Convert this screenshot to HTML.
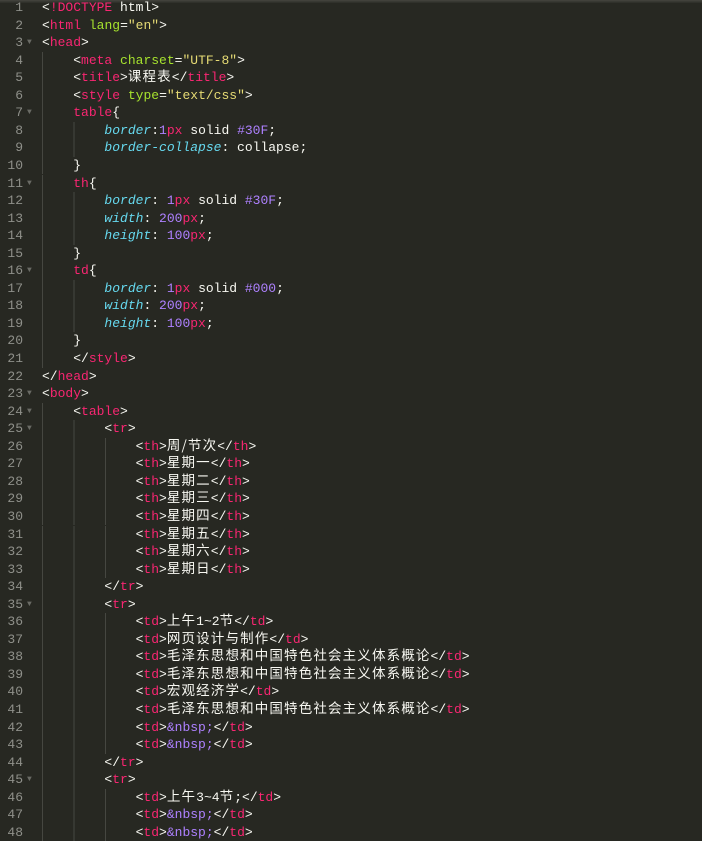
<!DOCTYPE html>
<html><head><meta charset="UTF-8"><style>
body{margin:0;width:702px;height:829px;overflow:hidden;background:#272822;position:relative;font-family:"Liberation Mono","Noto Sans CJK SC",monospace;font-size:13px;}
.bar{position:absolute;left:0;top:0;width:702px;height:3px;background:linear-gradient(#45453f,#2c2d27);}
.l{position:absolute;left:0;height:17.55px;line-height:17.55px;width:702px;white-space:pre;color:#F8F8F2;overflow:hidden;}
.n{position:absolute;left:0;width:23px;text-align:right;color:#8F908A;}
.f{position:absolute;left:27px;top:0;color:#6a6b65;font-size:8px;}
.c{position:absolute;left:42px;}
.g1,.g2,.g3,.g4{background-repeat:no-repeat;background-position:42px 0;background-image:repeating-linear-gradient(90deg,#464741 0 1px,transparent 1px 31.4px);}
.g1{background-size:2px 100%}.g2{background-size:33px 100%}.g3{background-size:65px 100%}.g4{background-size:96px 100%}
.t{color:#F92672}.a{color:#A6E22E}.s{color:#E6DB74}.p{color:#66D9EF;font-style:italic}.u{color:#AE81FF}
.k{letter-spacing:1.15px;font-family:"Noto Sans CJK SC",sans-serif;font-size:13.5px;line-height:1px;}
</style></head><body><div class="bar"></div>
<div class="l" style="top:-1px"><span class="n">1</span><span class="c">&lt;<span class="t">!DOCTYPE</span> html&gt;</span></div>
<div class="l" style="top:16.55px"><span class="n">2</span><span class="c">&lt;<span class="t">html</span> <span class="a">lang</span>=<span class="s">"en"</span>&gt;</span></div>
<div class="l" style="top:34.1px"><span class="n">3</span><span class="f">▼</span><span class="c">&lt;<span class="t">head</span>&gt;</span></div>
<div class="l g1" style="top:51.65px"><span class="n">4</span><span class="c">    &lt;<span class="t">meta</span> <span class="a">charset</span>=<span class="s">"UTF-8"</span>&gt;</span></div>
<div class="l g1" style="top:69.2px"><span class="n">5</span><span class="c">    &lt;<span class="t">title</span>&gt;<span class="k">课程表</span>&lt;/<span class="t">title</span>&gt;</span></div>
<div class="l g1" style="top:86.75px"><span class="n">6</span><span class="c">    &lt;<span class="t">style</span> <span class="a">type</span>=<span class="s">"text/css"</span>&gt;</span></div>
<div class="l g1" style="top:104.3px"><span class="n">7</span><span class="f">▼</span><span class="c">    <span class="t">table</span>{</span></div>
<div class="l g2" style="top:121.85px"><span class="n">8</span><span class="c">        <span class="p">border</span>:<span class="u">1</span><span class="t">px</span> solid <span class="u">#30F</span>;</span></div>
<div class="l g2" style="top:139.4px"><span class="n">9</span><span class="c">        <span class="p">border-collapse</span>: collapse;</span></div>
<div class="l g1" style="top:156.95px"><span class="n">10</span><span class="c">    }</span></div>
<div class="l g1" style="top:174.5px"><span class="n">11</span><span class="f">▼</span><span class="c">    <span class="t">th</span>{</span></div>
<div class="l g2" style="top:192.05px"><span class="n">12</span><span class="c">        <span class="p">border</span>: <span class="u">1</span><span class="t">px</span> solid <span class="u">#30F</span>;</span></div>
<div class="l g2" style="top:209.6px"><span class="n">13</span><span class="c">        <span class="p">width</span>: <span class="u">200</span><span class="t">px</span>;</span></div>
<div class="l g2" style="top:227.15px"><span class="n">14</span><span class="c">        <span class="p">height</span>: <span class="u">100</span><span class="t">px</span>;</span></div>
<div class="l g1" style="top:244.7px"><span class="n">15</span><span class="c">    }</span></div>
<div class="l g1" style="top:262.25px"><span class="n">16</span><span class="f">▼</span><span class="c">    <span class="t">td</span>{</span></div>
<div class="l g2" style="top:279.8px"><span class="n">17</span><span class="c">        <span class="p">border</span>: <span class="u">1</span><span class="t">px</span> solid <span class="u">#000</span>;</span></div>
<div class="l g2" style="top:297.35px"><span class="n">18</span><span class="c">        <span class="p">width</span>: <span class="u">200</span><span class="t">px</span>;</span></div>
<div class="l g2" style="top:314.9px"><span class="n">19</span><span class="c">        <span class="p">height</span>: <span class="u">100</span><span class="t">px</span>;</span></div>
<div class="l g1" style="top:332.45px"><span class="n">20</span><span class="c">    }</span></div>
<div class="l g1" style="top:350px"><span class="n">21</span><span class="c">    &lt;/<span class="t">style</span>&gt;</span></div>
<div class="l" style="top:367.55px"><span class="n">22</span><span class="c">&lt;/<span class="t">head</span>&gt;</span></div>
<div class="l" style="top:385.1px"><span class="n">23</span><span class="f">▼</span><span class="c">&lt;<span class="t">body</span>&gt;</span></div>
<div class="l g1" style="top:402.65px"><span class="n">24</span><span class="f">▼</span><span class="c">    &lt;<span class="t">table</span>&gt;</span></div>
<div class="l g2" style="top:420.2px"><span class="n">25</span><span class="f">▼</span><span class="c">        &lt;<span class="t">tr</span>&gt;</span></div>
<div class="l g3" style="top:437.75px"><span class="n">26</span><span class="c">            &lt;<span class="t">th</span>&gt;<span class="k">周/节次</span>&lt;/<span class="t">th</span>&gt;</span></div>
<div class="l g3" style="top:455.3px"><span class="n">27</span><span class="c">            &lt;<span class="t">th</span>&gt;<span class="k">星期一</span>&lt;/<span class="t">th</span>&gt;</span></div>
<div class="l g3" style="top:472.85px"><span class="n">28</span><span class="c">            &lt;<span class="t">th</span>&gt;<span class="k">星期二</span>&lt;/<span class="t">th</span>&gt;</span></div>
<div class="l g3" style="top:490.4px"><span class="n">29</span><span class="c">            &lt;<span class="t">th</span>&gt;<span class="k">星期三</span>&lt;/<span class="t">th</span>&gt;</span></div>
<div class="l g3" style="top:507.95px"><span class="n">30</span><span class="c">            &lt;<span class="t">th</span>&gt;<span class="k">星期四</span>&lt;/<span class="t">th</span>&gt;</span></div>
<div class="l g3" style="top:525.5px"><span class="n">31</span><span class="c">            &lt;<span class="t">th</span>&gt;<span class="k">星期五</span>&lt;/<span class="t">th</span>&gt;</span></div>
<div class="l g3" style="top:543.05px"><span class="n">32</span><span class="c">            &lt;<span class="t">th</span>&gt;<span class="k">星期六</span>&lt;/<span class="t">th</span>&gt;</span></div>
<div class="l g3" style="top:560.6px"><span class="n">33</span><span class="c">            &lt;<span class="t">th</span>&gt;<span class="k">星期日</span>&lt;/<span class="t">th</span>&gt;</span></div>
<div class="l g2" style="top:578.15px"><span class="n">34</span><span class="c">        &lt;/<span class="t">tr</span>&gt;</span></div>
<div class="l g2" style="top:595.7px"><span class="n">35</span><span class="f">▼</span><span class="c">        &lt;<span class="t">tr</span>&gt;</span></div>
<div class="l g3" style="top:613.25px"><span class="n">36</span><span class="c">            &lt;<span class="t">td</span>&gt;<span class="k">上午</span>1~2<span class="k">节</span>&lt;/<span class="t">td</span>&gt;</span></div>
<div class="l g3" style="top:630.8px"><span class="n">37</span><span class="c">            &lt;<span class="t">td</span>&gt;<span class="k">网页设计与制作</span>&lt;/<span class="t">td</span>&gt;</span></div>
<div class="l g3" style="top:648.35px"><span class="n">38</span><span class="c">            &lt;<span class="t">td</span>&gt;<span class="k">毛泽东思想和中国特色社会主义体系概论</span>&lt;/<span class="t">td</span>&gt;</span></div>
<div class="l g3" style="top:665.9px"><span class="n">39</span><span class="c">            &lt;<span class="t">td</span>&gt;<span class="k">毛泽东思想和中国特色社会主义体系概论</span>&lt;/<span class="t">td</span>&gt;</span></div>
<div class="l g3" style="top:683.45px"><span class="n">40</span><span class="c">            &lt;<span class="t">td</span>&gt;<span class="k">宏观经济学</span>&lt;/<span class="t">td</span>&gt;</span></div>
<div class="l g3" style="top:701px"><span class="n">41</span><span class="c">            &lt;<span class="t">td</span>&gt;<span class="k">毛泽东思想和中国特色社会主义体系概论</span>&lt;/<span class="t">td</span>&gt;</span></div>
<div class="l g3" style="top:718.55px"><span class="n">42</span><span class="c">            &lt;<span class="t">td</span>&gt;<span class="u">&amp;nbsp;</span>&lt;/<span class="t">td</span>&gt;</span></div>
<div class="l g3" style="top:736.1px"><span class="n">43</span><span class="c">            &lt;<span class="t">td</span>&gt;<span class="u">&amp;nbsp;</span>&lt;/<span class="t">td</span>&gt;</span></div>
<div class="l g2" style="top:753.65px"><span class="n">44</span><span class="c">        &lt;/<span class="t">tr</span>&gt;</span></div>
<div class="l g2" style="top:771.2px"><span class="n">45</span><span class="f">▼</span><span class="c">        &lt;<span class="t">tr</span>&gt;</span></div>
<div class="l g3" style="top:788.75px"><span class="n">46</span><span class="c">            &lt;<span class="t">td</span>&gt;<span class="k">上午</span>3~4<span class="k">节</span>;&lt;/<span class="t">td</span>&gt;</span></div>
<div class="l g3" style="top:806.3px"><span class="n">47</span><span class="c">            &lt;<span class="t">td</span>&gt;<span class="u">&amp;nbsp;</span>&lt;/<span class="t">td</span>&gt;</span></div>
<div class="l g3" style="top:823.85px"><span class="n">48</span><span class="c">            &lt;<span class="t">td</span>&gt;<span class="u">&amp;nbsp;</span>&lt;/<span class="t">td</span>&gt;</span></div>
</body></html>
